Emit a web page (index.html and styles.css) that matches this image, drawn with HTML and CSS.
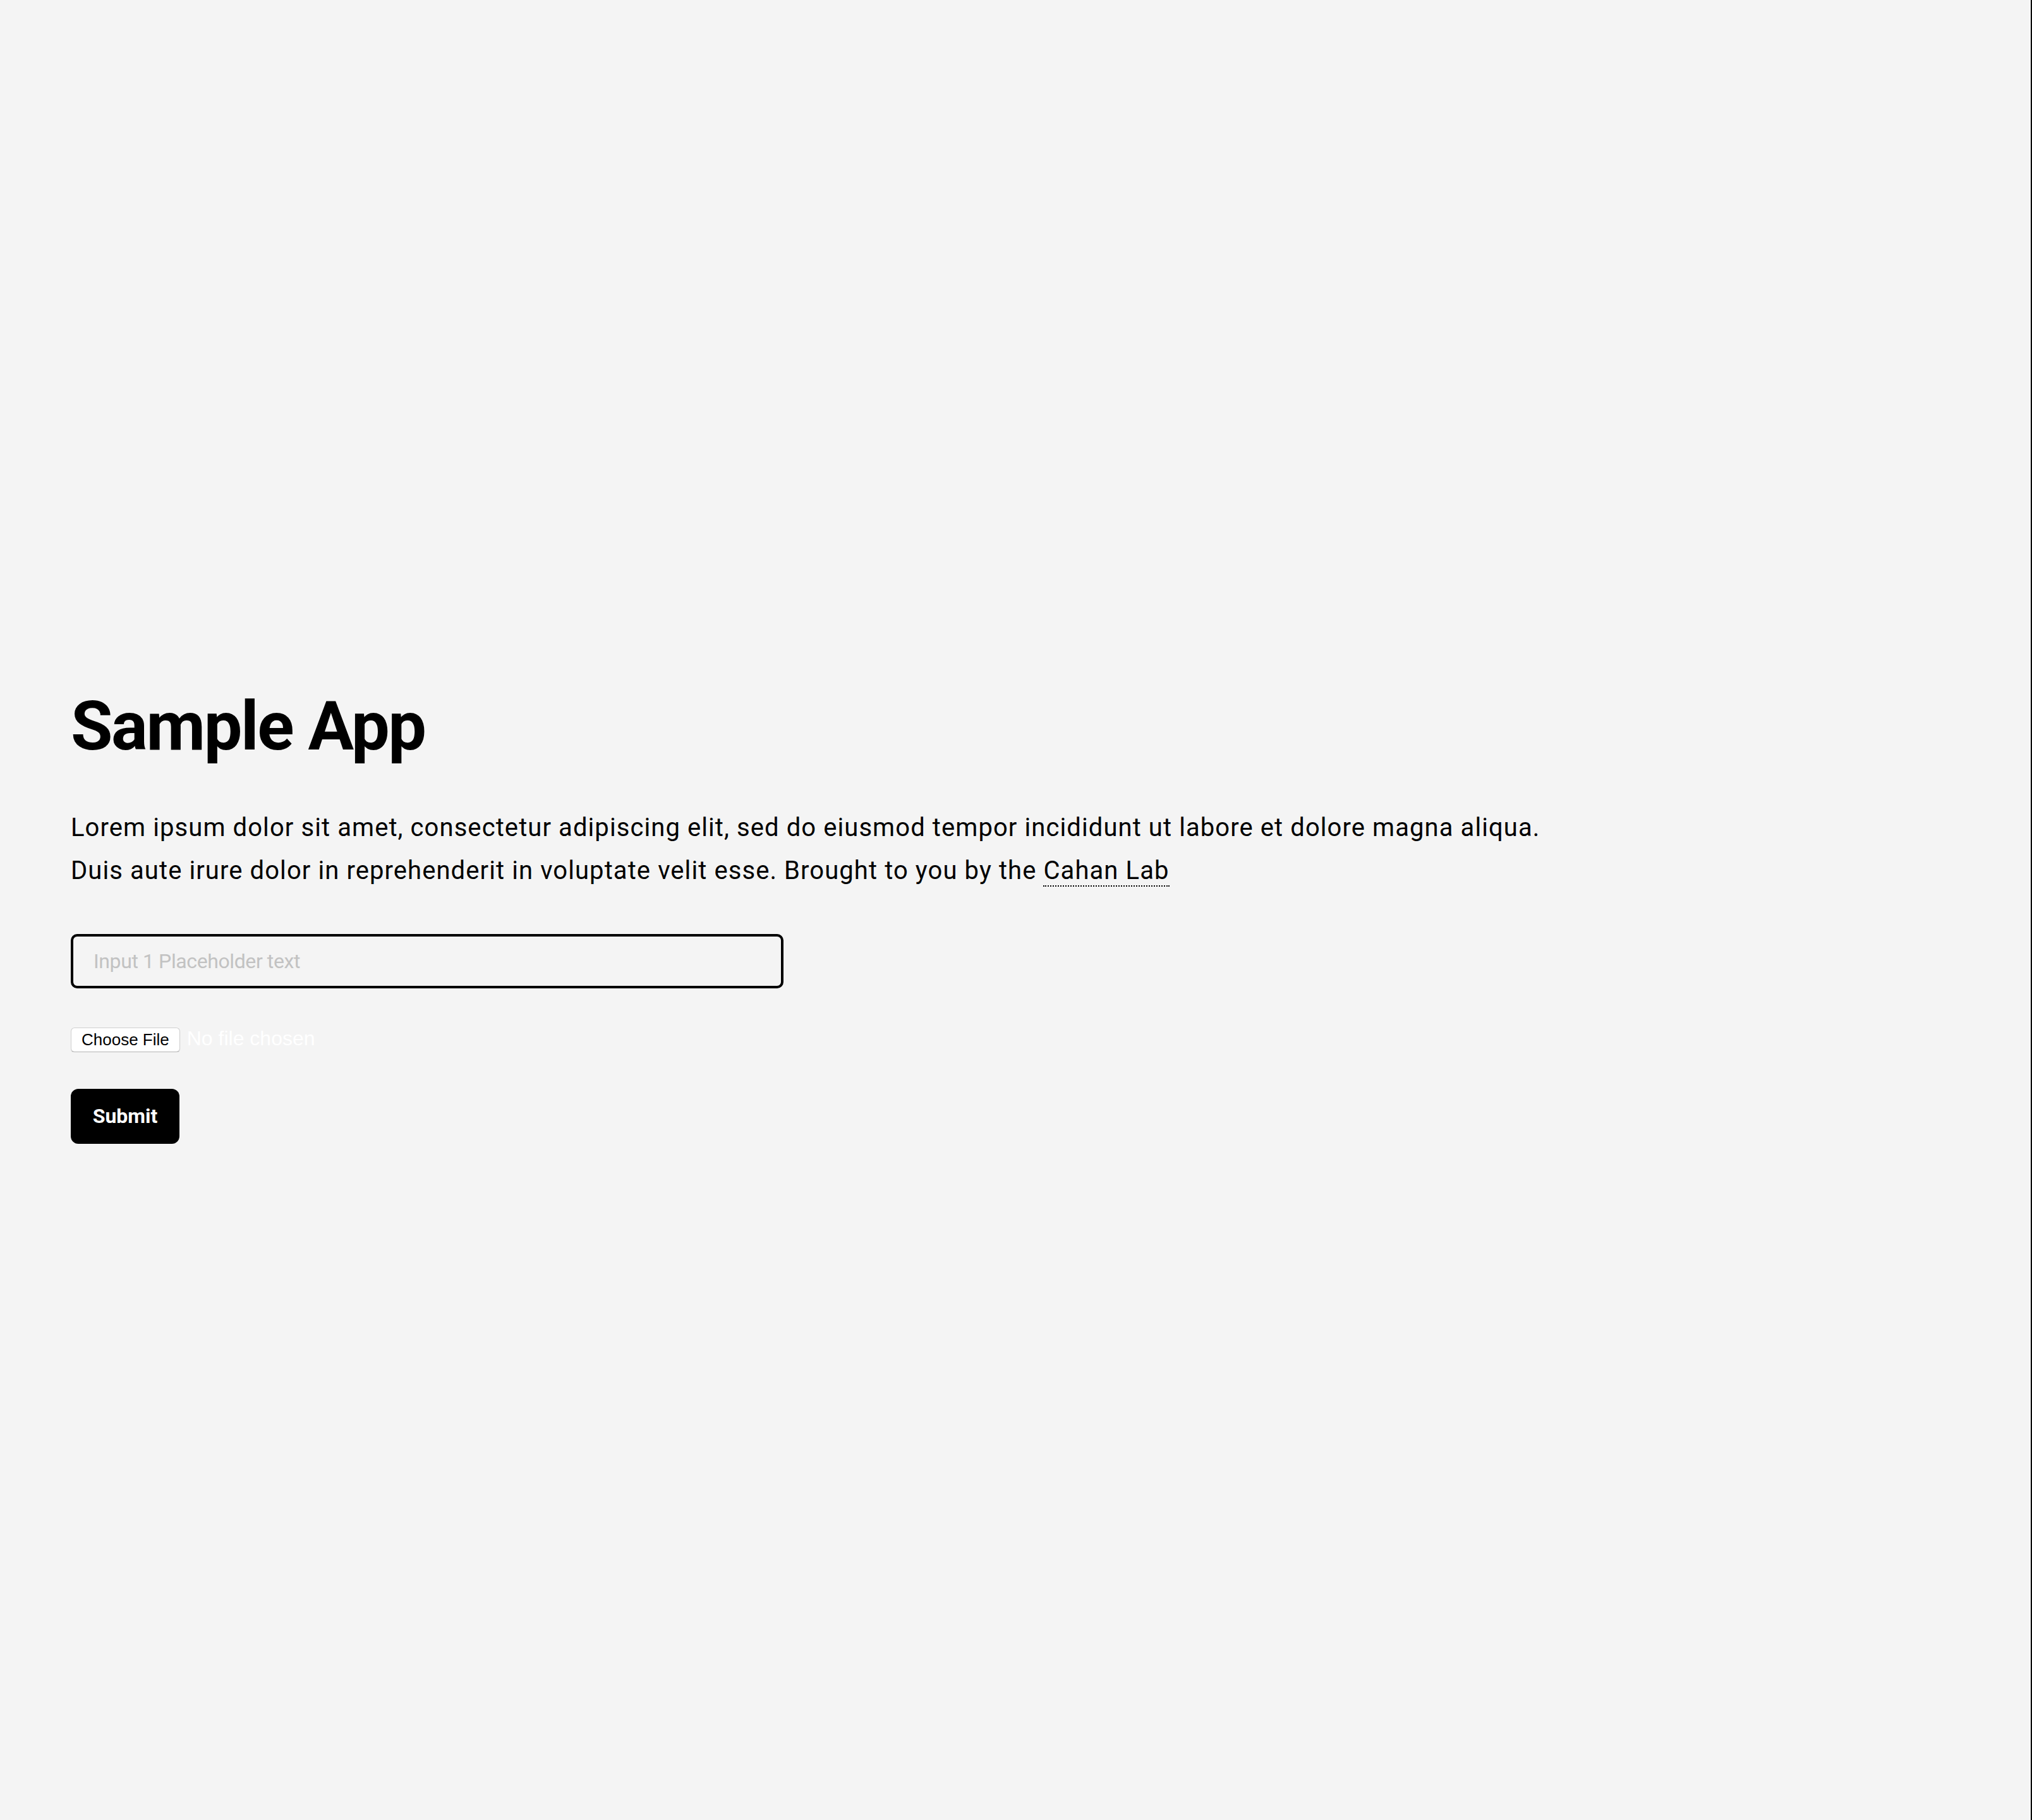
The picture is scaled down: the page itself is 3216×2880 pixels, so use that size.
FILE: index.html
```html
<!DOCTYPE html>
<html lang="en">
<head>
<meta charset="utf-8">
<title>Sample App</title>
<link rel="stylesheet" href="styles.css">
</head>
<body>
<main class="page">
  <h1 class="title">Sample App</h1>
  <p class="intro">Lorem ipsum dolor sit amet, consectetur adipiscing elit, sed do eiusmod tempor incididunt ut labore et dolore magna aliqua.<br>Duis aute irure dolor in reprehenderit in voluptate velit esse. Brought to you by the <a class="lab-link" href="#">Cahan Lab</a></p>
  <form class="form">
    <input class="text-input" type="text" placeholder="Input 1 Placeholder text">
    <input class="file-input" type="file">
    <button class="submit" type="button">Submit</button>
  </form>
</main>
</body>
</html>
```

FILE: styles.css
```css
html, body {
  margin: 0;
  padding: 0;
}
body {
  background: #f4f4f4;
  color: #000;
  font-family: Roboto, "Liberation Sans", sans-serif;
  min-height: 100vh;
  box-sizing: border-box;
  border-right: 2px solid #000;
}
.page {
  padding: 1085px 0 0 112px;
}
.title {
  margin: 0;
  font-size: 108px;
  font-weight: 700;
  line-height: 1.2;
  letter-spacing: -2.4px;
}
.intro {
  margin: 61px 0 0;
  font-size: 40px;
  line-height: 68px;
  letter-spacing: 1.08px;
}
.lab-link {
  color: #000;
  text-decoration: none;
  border-bottom: 2px dotted #000;
}
.form {
  display: flex;
  flex-direction: column;
  align-items: flex-start;
  margin-top: 66px;
}
.text-input {
  box-sizing: border-box;
  width: 1128px;
  height: 86px;
  border: 4px solid #000;
  border-radius: 10px;
  background: transparent;
  padding: 0 32px;
  font-family: Roboto, sans-serif;
  font-size: 32px;
  letter-spacing: -0.4px;
  color: #000;
  outline: none;
}
.text-input::placeholder {
  color: #c2c2c2;
}
.file-input {
  margin-top: 61px;
  font-family: "Liberation Sans", Arial, sans-serif;
  font-size: 32px;
  color: #fff;
}
.file-input::file-selector-button {
  font-family: "Liberation Sans", Arial, sans-serif;
  font-size: 26px;
  color: #000;
  background: #fff;
  border: 1px solid #cfcfcf;
  border-bottom-color: #b5b5b5;
  border-radius: 6px;
  padding: 3px 16px;
  margin-right: 11px;
  box-shadow: 0 1px 1px rgba(0, 0, 0, 0.12);
}
.submit {
  margin-top: 58px;
  width: 172px;
  height: 87px;
  border: none;
  border-radius: 12px;
  background: #000;
  color: #fff;
  font-family: Roboto, sans-serif;
  font-weight: 700;
  font-size: 32px;
  padding: 0;
}
```
